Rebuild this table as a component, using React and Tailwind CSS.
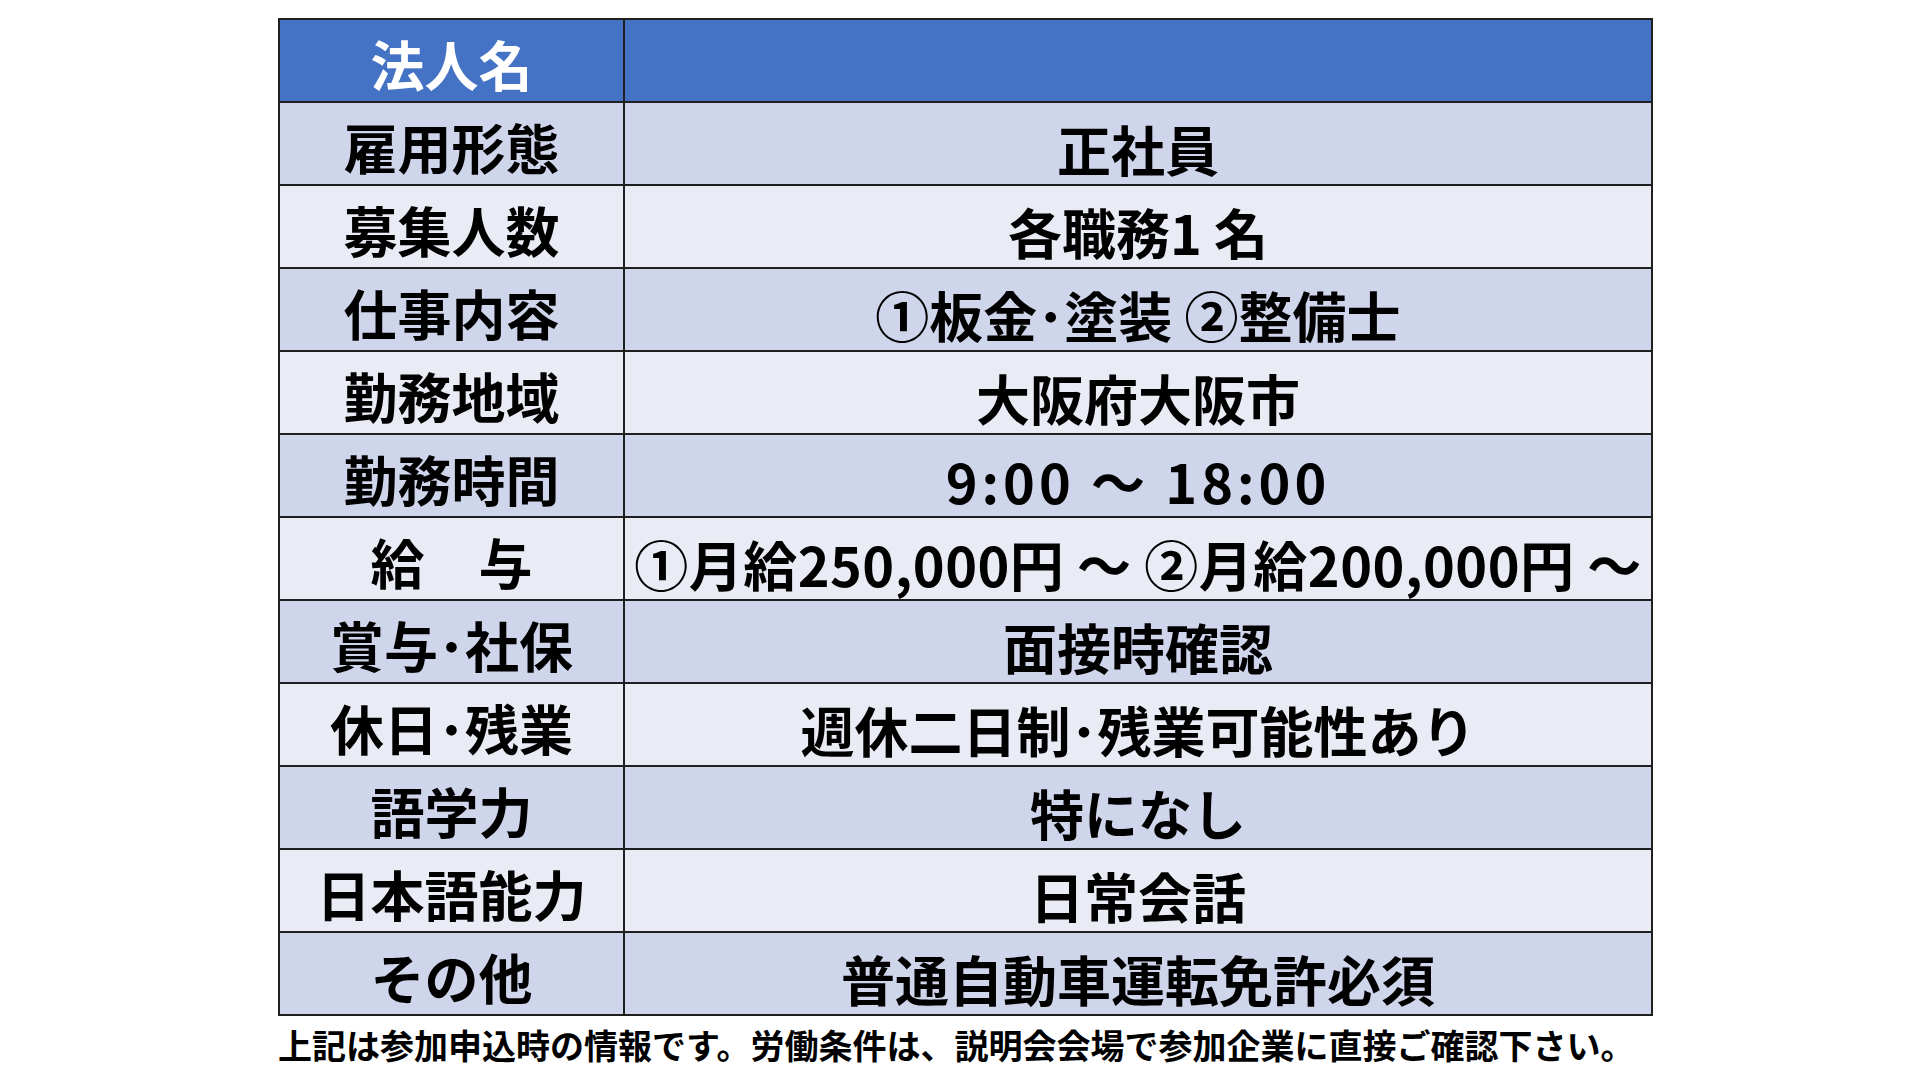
const rows = [
  { label: '雇用形態', value: '正社員' },
  { label: '募集人数', value: '各職務1 名' },
  { label: '仕事内容', value: '①板金･塗装 ②整備士' },
  { label: '勤務地域', value: '大阪府大阪市' },
  { label: '勤務時間', value: '9:00 ～ 18:00', cls: 'tracking-[4px]' },
  { label: '給　与', value: '①月給250,000円 ～ ②月給200,000円 ～', cls: 'tracking-[0.5px]' },
  { label: '賞与･社保', value: '面接時確認' },
  { label: '休日･残業', value: '週休二日制･残業可能性あり' },
  { label: '語学力', value: '特になし' },
  { label: '日本語能力', value: '日常会話' },
  { label: 'その他', value: '普通自動車運転免許必須' },
];

export default function App() {
  return (
    <div
      className="w-[1920px] h-[1080px] bg-white pl-[278px] pt-[18px]"
      style={{ fontFamily: '"Noto Sans CJK JP", "Noto Sans", sans-serif' }}
    >
      <table className="w-[1375px] border-collapse border-2 border-[#1f1f1f] table-fixed">
        <colgroup>
          <col className="w-[345px]" />
          <col />
        </colgroup>
        <tbody>
          <tr className="h-[83px] bg-[#4472c4]">
            <td className="border-2 border-[#1f1f1f] text-center text-white font-bold text-[54px] leading-none pt-[6px]">
              法人名
            </td>
            <td className="border-2 border-[#1f1f1f]"></td>
          </tr>
          {rows.map((r, i) => (
            <tr
              key={r.label}
              className={i % 2 === 0 ? 'h-[83px] bg-[#cfd5ea]' : 'h-[83px] bg-[#e9ebf5]'}
            >
              <td className="border-2 border-[#1f1f1f] text-center text-black font-bold text-[54px] leading-none pt-[6px] whitespace-nowrap">
                {r.label}
              </td>
              <td
                className={
                  'border-2 border-[#1f1f1f] text-center text-black font-bold text-[54px] leading-none pt-[10px] whitespace-nowrap ' +
                  (r.cls || '')
                }
              >
                {r.value}
              </td>
            </tr>
          ))}
        </tbody>
      </table>
      <p className="mt-[8px] text-[34px] font-bold leading-[42px] text-black whitespace-nowrap">
        上記は参加申込時の情報です。労働条件は、説明会会場で参加企業に直接ご確認下さい。
      </p>
    </div>
  );
}
